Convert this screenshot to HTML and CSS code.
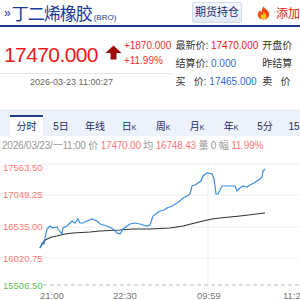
FILE: index.html
```html
<!DOCTYPE html>
<html lang="zh">
<head>
    <meta charset="UTF-8">
    <title>丁二烯橡胶</title>
    <link rel="stylesheet" href="styles.css">
</head>
<body>

<header class="top">
    <div class="title">
        <span class="raquo">»</span><span class="name">丁二烯橡胶</span><span class="code">(BRO)</span>
    </div>
    <a class="btn" href="#">期货持仓</a>
    <span class="fire">
        <svg width="15" height="14" viewBox="0 0 15 14">
            <path d="M7.5 0.5 C9 3 12 4 13 7 C14 10.5 11.5 13.5 7.5 13.5 C3.5 13.5 1 10.5 2 7.5 C2.5 6 3.5 5 4 4 C4.5 5.5 5 6 5.5 6.5 C5.5 4 6.5 2 7.5 0.5 Z" fill="#f04a12"/>
            <path d="M7.5 6 C8.5 7.5 10.5 8.5 10.5 10.5 C10.5 12.5 9 13.5 7.5 13.5 C6 13.5 4.5 12.5 4.5 10.8 C4.5 9.5 5.5 9 6 8.2 C6.5 9 7 9.3 7.2 9.5 C7 8.2 7 7 7.5 6 Z" fill="#ffc21a"/>
        </svg>
    </span>
    <span class="add">添加</span>
</header>

<div class="quote">
    <div class="quote-left">
        <div class="price-row">
            <span class="price">17470.000</span>
            <svg class="arrow" width="17" height="15" viewBox="0 0 17 15">
                <path d="M8.5 0.5 L16.5 8 L11.5 8 L11.5 14.5 L5.5 14.5 L5.5 8 L0.5 8 Z" fill="#9c0a0a"/>
            </svg>
            <div class="change">
                <span>+1870.000</span>
                <span>+11.99%</span>
            </div>
        </div>
        <div class="time">2026-03-23 11:00:27</div>
    </div>
    <div class="quote-info">
        <div class="info-row">最新价: <span class="red">17470.000</span></div>
        <div class="info-row">结算价: <span class="blue">0.000</span></div>
        <div class="info-row">买&nbsp;&nbsp;&nbsp;价: <span class="blue">17465.000</span></div>
    </div>
    <div class="quote-info">
        <div class="info-row">开盘价</div>
        <div class="info-row">昨结算</div>
        <div class="info-row">卖&nbsp;&nbsp;&nbsp;价</div>
    </div>
</div>

<nav class="tabs">
    <a class="tab active">分时</a>
    <a class="tab">5日</a>
    <a class="tab">年线</a>
    <a class="tab">日<small>K</small></a>
    <a class="tab">周<small>K</small></a>
    <a class="tab">月<small>K</small></a>
    <a class="tab">年<small>K</small></a>
    <a class="tab">5分</a>
    <a class="tab">15分</a>
</nav>

<div class="status">
    2026/03/23/一11:00 价 <span class="num">17470.00</span> 均 <span class="num">16748.43</span> 量 0 幅 <span class="num">11.99%</span>
</div>

<svg class="chart" width="300" height="145" viewBox="0 155 300 145">
    <!-- 网格 -->
    <g class="grid">
        <line x1="43" y1="163" x2="300" y2="163"/>
        <line x1="43" y1="194" x2="300" y2="194"/>
        <line x1="43" y1="226" x2="300" y2="226"/>
        <line x1="43" y1="257" x2="300" y2="257"/>
        <line x1="208" y1="163" x2="208" y2="288"/>
    </g>
    <line class="base" x1="43" y1="284" x2="300" y2="284"/>

    <!-- 纵轴 -->
    <g class="ylabel">
        <text x="3" y="170">17563.50</text>
        <text x="3" y="197">17049.25</text>
        <text x="3" y="229">16535.00</text>
        <text x="3" y="261">16020.75</text>
        <text x="3" y="288" class="down">15506.50</text>
    </g>

    <!-- 横轴 -->
    <g class="xlabel">
        <text x="40" y="298">21:00</text>
        <text x="113" y="298">22:30</text>
        <text x="197" y="298">09:59</text>
        <text x="283" y="298">11:2</text>
    </g>

    <polyline class="avg" points="40,247 44,240 47,238 52,236 57,235 65,233 73,232 90,231 100,230 120,229 133,228 150,228 170,227 183,225 195,222 203,220 212,218 220,217 240,215 265,212"/>
    <polyline class="line" points="40,247 42,242 44,243 45,237 47,228 50,225 53,227 57,226 58,228 62,233 63,227 67,225 70,222 72,220 75,222 78,218 80,222 83,222 87,220 92,218 97,220 100,223 107,225 113,228 117,232 120,233 123,228 130,223 135,222 140,223 147,225 150,224 153,215 157,212 160,210 164,209 167,207 172,205 177,202 180,200 183,197 187,195 190,193 192,185 195,184 198,182 201,180 203,175 207,172 212,173 214,178 215,185 216,193 218,193 222,185 235,185 237,190 240,187 243,185 247,186 250,184 254,182 257,180 260,178 262,176 263,170 265,168"/>
</svg>

</body>
</html>
```

FILE: styles.css
```css
body {
    margin: 0;
    padding: 0;
    width: 300px;
    height: 300px;
    overflow: hidden;
    font-family: "Liberation Sans", "Noto Sans CJK SC", sans-serif;
    background: #fff;
    color: #333;
}

/* 顶部标题 */
.top {
    display: flex;
    align-items: center;
    height: 25px;
    border-bottom: 2px solid #1e3a86;
    white-space: nowrap;
}

.title {
    width: 191px;
    padding-left: 4px;
    color: #1b3a9a;
}

.raquo {
    font-size: 12px;
    margin-right: 1px;
    vertical-align: 3px;
}

.name {
    font-size: 17px;
    letter-spacing: -1px;
}

.code {
    font-size: 8px;
    margin-left: 2px;
}

.btn {
    display: block;
    width: 49px;
    height: 19px;
    line-height: 19px;
    text-align: center;
    font-size: 11px;
    color: #1b2f6e;
    text-decoration: none;
    background: linear-gradient(#f4f7fc, #e3eaf6);
    border: 1px solid #d3dcea;
    border-radius: 2px;
}

.fire {
    margin-left: 14px;
    height: 14px;
}

.add {
    margin-left: 5px;
    font-size: 12px;
    color: #e0201a;
}

/* 报价区 */
.quote {
    display: flex;
    height: 83px;
    white-space: nowrap;
}

.quote-left {
    width: 178px;
}

.price-row {
    display: flex;
    align-items: center;
    height: 36px;
    margin-top: 10px;
    padding-left: 4px;
    border-bottom: 1px solid #e6e6e6;
}

.price {
    font-size: 21px;
    color: #f01818;
    letter-spacing: -0.6px;
}

.arrow {
    margin: -6px 2px 0 7px;
}

.change {
    display: flex;
    flex-direction: column;
    gap: 4px;
    margin-top: -4px;
    font-size: 10px;
    color: #f03232;
}

.time {
    padding: 3px 0 0 30px;
    font-size: 9px;
    color: #666;
}

.quote-info {
    width: 106px;
    padding: 10px 0 0 4px;
    font-size: 10px;
    color: #333;
}

.info-row {
    height: 18px;
    line-height: 18px;
}

.red {
    color: #f01818;
}

.blue {
    color: #2f6ad0;
}

/* 切换标签 */
.tabs {
    display: flex;
    height: 21px;
    padding: 4px 0 0 10px;
    background: #edf2fa;
    border-top: 1px solid #e2e9f4;
    white-space: nowrap;
}

.tab {
    flex: 0 0 34px;
    text-align: center;
    font-size: 10px;
    line-height: 19px;
    color: #1b2a66;
    border-top: 2px solid transparent;
}

.tab small {
    font-size: 7px;
}

.tab.active {
    flex-basis: 33px;
    margin-right: 1px;
    background: #fff;
    border-top-color: #1e3a86;
}

.status {
    height: 20px;
    line-height: 20px;
    padding-left: 2px;
    font-size: 10px;
    color: #999;
    white-space: nowrap;
    letter-spacing: -0.2px;
}

.status .num {
    color: #f77;
}

/* 分时图 */
.chart {
    display: block;
}

.grid line {
    stroke: #eee;
    stroke-width: 1;
}

.base {
    stroke: #bbb;
    stroke-dasharray: 4 3;
}

.ylabel text {
    font-size: 9.5px;
    fill: #f77;
}

.ylabel text.down {
    fill: #5bbf5b;
}

.xlabel text {
    font-size: 9.5px;
    fill: #777;
}

.line {
    fill: none;
    stroke: #3a8ee0;
    stroke-width: 1.2;
}

.avg {
    fill: none;
    stroke: #333;
    stroke-width: 1.2;
}
```
